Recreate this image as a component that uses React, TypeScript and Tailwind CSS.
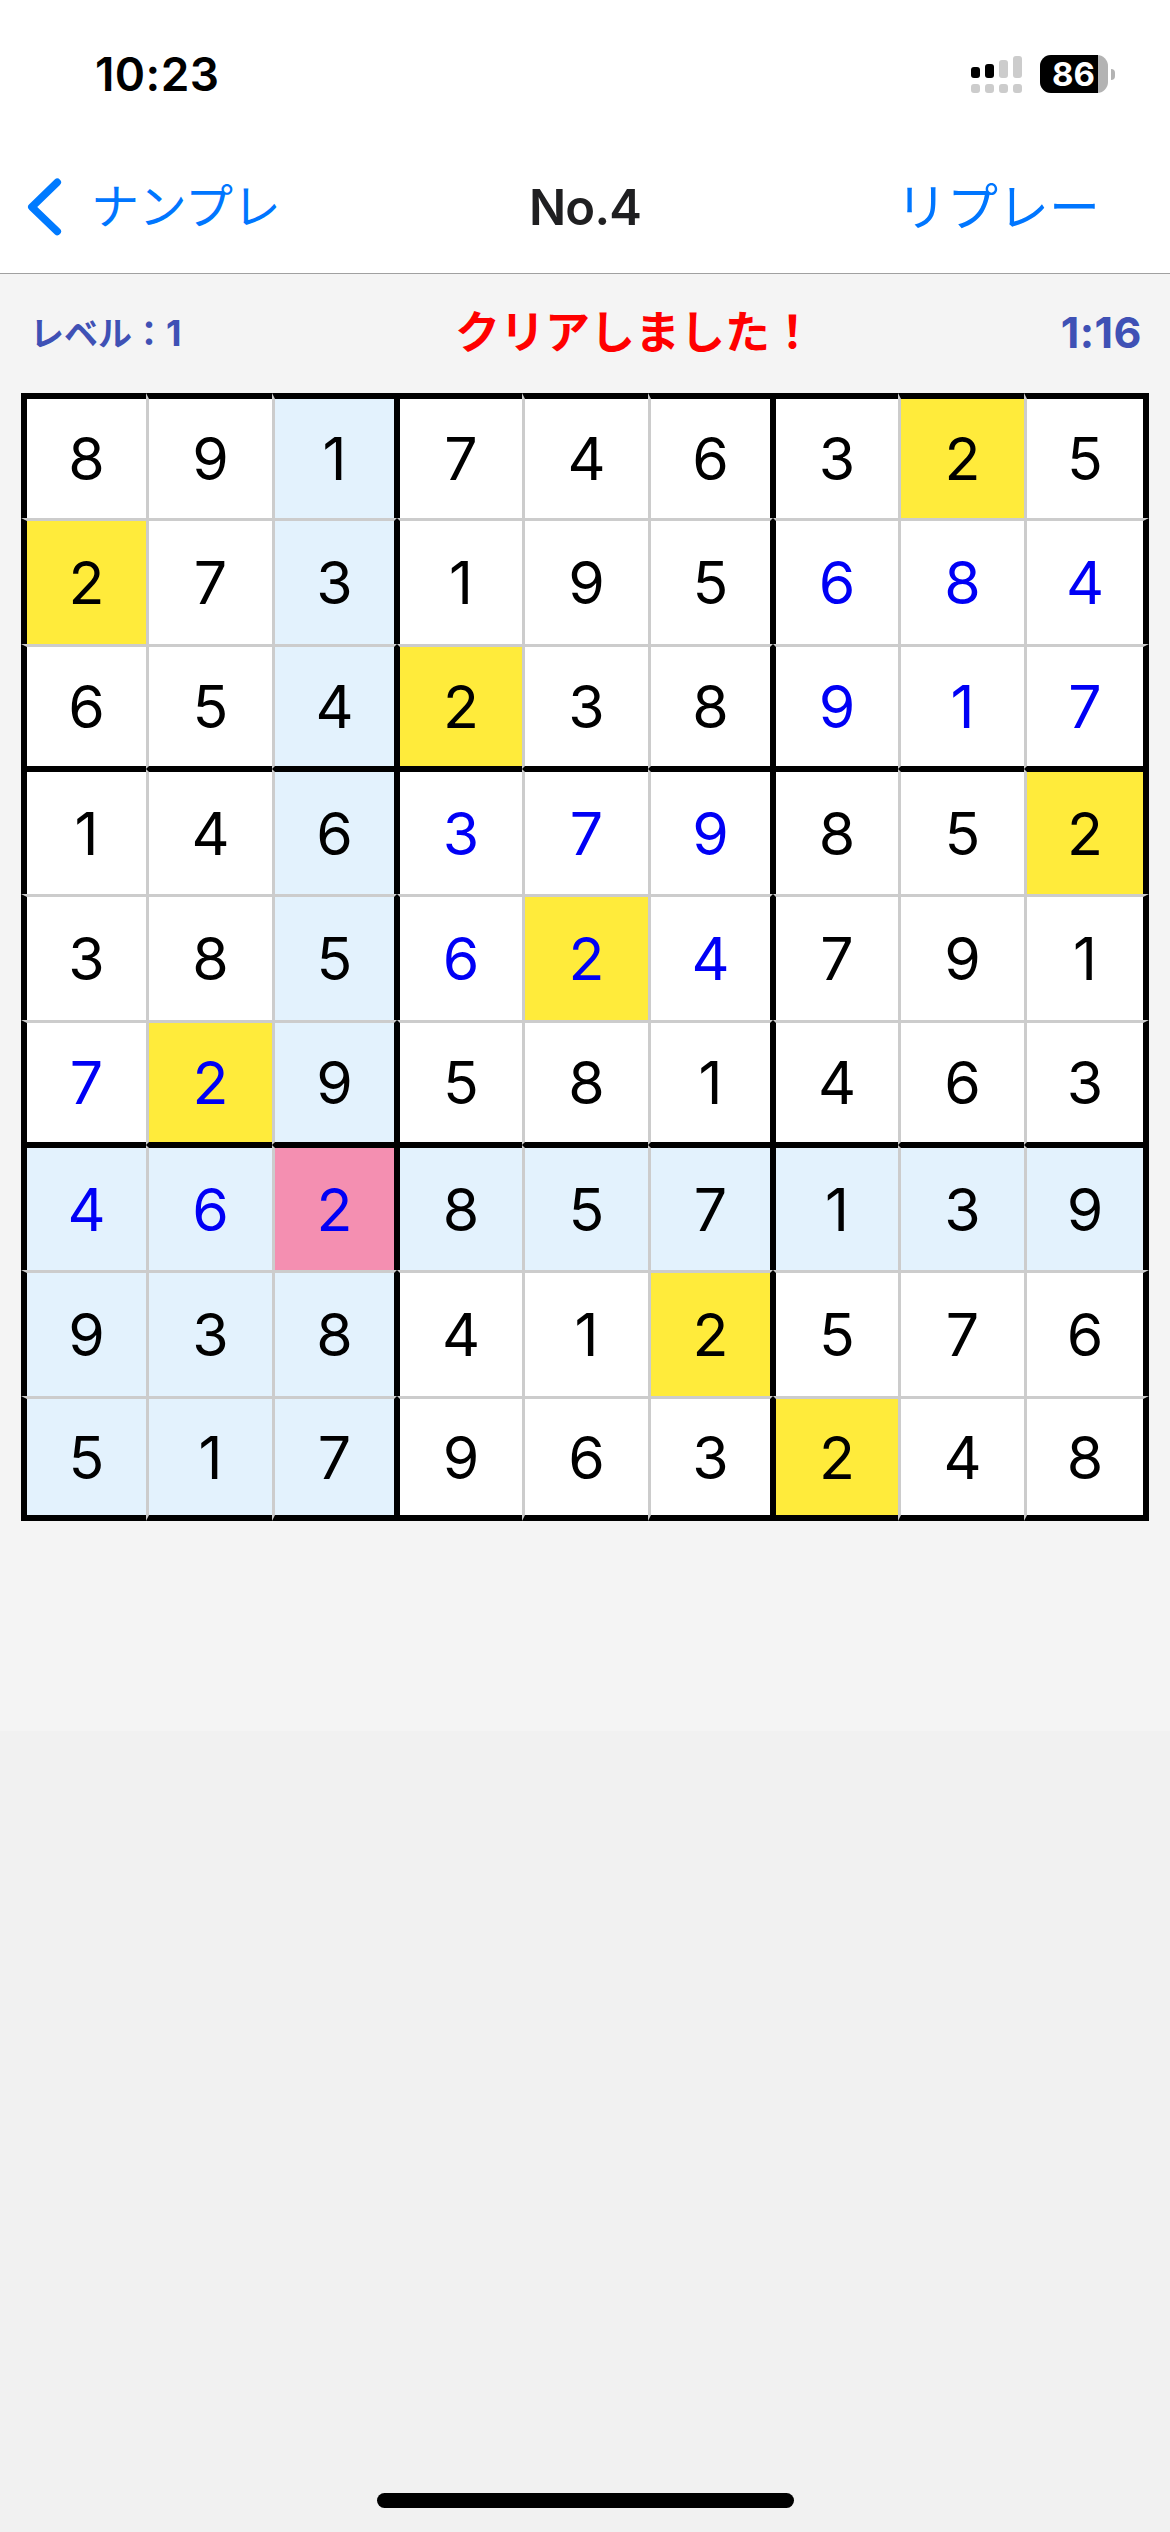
import clsx from 'clsx';

const ROWS = [
  '891746325',
  '273195684',
  '654238917',
  '146379852',
  '385624791',
  '729581463',
  '462857139',
  '938412576',
  '517963248',
];

// 1 = number filled in by the player
const FILLED = [
  '000000000',
  '000000111',
  '000000111',
  '000111000',
  '000111000',
  '110000000',
  '111000000',
  '000000000',
  '000000000',
];

const SELECTED = { row: 6, col: 2 };

const isRelated = (row: number, col: number) =>
  row === SELECTED.row ||
  col === SELECTED.col ||
  (Math.floor(row / 3) === Math.floor(SELECTED.row / 3) && Math.floor(col / 3) === Math.floor(SELECTED.col / 3));

const cellBackground = (row: number, col: number) => {
  if (row === SELECTED.row && col === SELECTED.col) return 'bg-[#f48fb1]';
  if (ROWS[row][col] === ROWS[SELECTED.row][SELECTED.col]) return 'bg-[#ffeb3b]';
  return isRelated(row, col) ? 'bg-[#e3f2fd]' : 'bg-white';
};

const Cell = ({ row, col }: { row: number; col: number }) => (
  <div
    className={clsx(
      'flex items-center justify-center text-[59px] leading-none',
      cellBackground(row, col),
      FILLED[row][col] === '1' ? 'text-[#0000f5]' : 'text-black',
      row === 0 ? 'border-t-[6px]' : 'border-t-[3px]',
      row % 3 === 0 ? 'border-t-black' : 'border-t-[#cccccc]',
      col === 0 ? 'border-l-[6px]' : 'border-l-[3px]',
      col % 3 === 0 ? 'border-l-black' : 'border-l-[#cccccc]',
      row === 8 && 'border-b-[6px] border-b-black',
      (row === 2 || row === 5) && 'border-b-[3px] border-b-black',
      col === 8 && 'border-r-[6px] border-r-black',
      (col === 2 || col === 5) && 'border-r-[3px] border-r-black'
    )}
  >
    {ROWS[row][col]}
  </div>
);

const Board = () => (
  <div className="mx-[21px] grid grid-cols-[125px_126px_125px_125px_126px_125px_125px_126px_125px] grid-rows-[125px_126px_125px_125px_126px_125px_125px_126px_125px]">
    {ROWS.map((line, row) => line.split('').map((_, col) => <Cell key={`${row}-${col}`} row={row} col={col} />))}
  </div>
);

const SignalIcon = () => (
  <svg width="51" height="38" viewBox="0 0 51 38">
    <g fill="#000000">
      <rect x="0" y="12" width="9" height="11" rx="3" />
      <rect x="14" y="9" width="9" height="14" rx="3" />
    </g>
    <g fill="#cccccc">
      <rect x="28" y="5" width="9" height="18" rx="3" />
      <rect x="42" y="1" width="9" height="22" rx="3" />
      <rect x="0" y="29" width="9" height="9" rx="3" />
      <rect x="14" y="29" width="9" height="9" rx="3" />
      <rect x="28" y="29" width="9" height="9" rx="3" />
      <rect x="42" y="29" width="9" height="9" rx="3" />
    </g>
  </svg>
);

const Battery = () => (
  <div className="flex items-center gap-[3px]">
    <div className="flex h-[38px] w-[68px] rounded-[11px] bg-[#b3b3b3]">
      <div className="flex w-[58px] items-center justify-end rounded-l-[11px] bg-black pr-[3px] text-[33px] font-bold leading-[38px] text-white">
        86
      </div>
    </div>
    <div className="h-[11px] w-1 rounded-r-full bg-[#b3b3b3]" />
  </div>
);

const StatusBar = () => (
  <div className="flex h-[141px] items-start justify-between pl-[95px] pr-[55px] pt-[55px]">
    <span className="text-[46px] font-semibold leading-[38px] tracking-[0.4px]">10:23</span>
    <div className="flex gap-[18px]">
      <SignalIcon />
      <Battery />
    </div>
  </div>
);

const NavBar = () => (
  <div className="grid h-[133px] grid-cols-3 items-center border-b border-[#a0a0a0]">
    <div className="flex items-center text-[48px] leading-none tracking-[-0.3px] text-[#0076ff]">
      <svg className="ml-[27px] mr-7" width="36" height="60" viewBox="0 0 36 60" fill="none">
        <path d="M30.3 5.3 4.8 30 30.3 54.5" stroke="#007aff" strokeWidth="7.5" strokeLinecap="round" strokeLinejoin="round" />
      </svg>
      ナンプレ
    </div>
    <div className="text-center text-[49px] font-semibold leading-none tracking-[-0.8px] text-[#1f1f21]">No.4</div>
    <div className="pr-[70px] text-right text-[51px] leading-none text-[#0076ff]">リプレー</div>
  </div>
);

const InfoRow = () => (
  <div className="grid h-[119px] grid-cols-[425px_360px_1fr] items-center pl-[30px] pr-[28px] font-bold leading-none text-[#3f51b5]">
    <span className="pb-0.5 text-[34px]">
      レベル：<span className="text-[36px]">1</span>
    </span>
    <span className="whitespace-nowrap pb-0.5 text-[45px] text-[#ff0000]">クリアしました！</span>
    <span className="pb-0.5 text-right text-[43px] tracking-[0.5px]">1:16</span>
  </div>
);

export default function App() {
  return (
    <div className="flex h-[2532px] w-[1170px] flex-col bg-[#f1f1f1] font-['Inter','Noto_Sans_CJK_JP',sans-serif] text-black" lang="ja">
      <header className="bg-white">
        <StatusBar />
        <NavBar />
      </header>
      <main className="h-[1457px] bg-[#f4f4f4]">
        <InfoRow />
        <Board />
      </main>
      <div className="mx-auto mb-6 mt-auto h-[15px] w-[417px] rounded-full bg-black" />
    </div>
  );
}
